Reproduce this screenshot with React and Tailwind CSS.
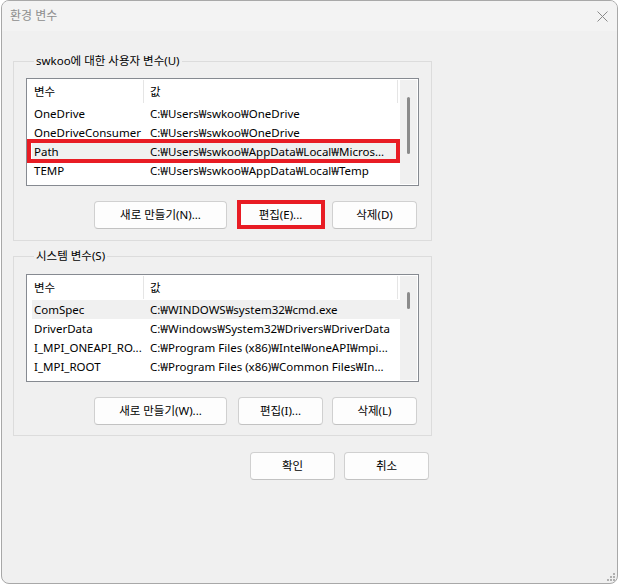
import React from "react";

const FONT = "font-['Noto_Sans','Noto_Sans_CJK_KR',sans-serif]";

function Btn({ children, w, ml, red }) {
  return (
    <div className={`relative ${ml}`}>
      <button
        className={`${w} h-[28px] rounded-[4px] border border-[#d0d0d0] border-b-[#c2c2c2] bg-[#fdfdfd] text-[11.5px] leading-[16px] text-black flex items-center justify-center`}
      >
        {children}
      </button>
      {red && (
        <div className="absolute -left-[1px] -right-[2px] -top-[1px] bottom-0 border-4 border-[#e81c24] pointer-events-none" />
      )}
    </div>
  );
}

function List({ rows, hi, red, thumbTop, thumbH }) {
  return (
    <div className="w-[393px] h-[108px] border border-[#868a91] bg-white flex">
      <div className="w-[373px] h-full overflow-hidden flex flex-col">
        <div className="h-[25px] shrink-0 flex text-[11.5px] text-black">
          <div className="w-[117px] pl-[7px] flex items-center border-r border-[#e5e5e5] my-[1px]">
            변수
          </div>
          <div className="w-[254px] pl-[6px] flex items-center border-r border-[#e5e5e5] my-[1px]">
            값
          </div>
        </div>
        {rows.map((r, i) => (
          <div key={i} className="relative h-[19px] shrink-0 pl-[5px] flex">
            <div
              className={`flex-1 flex text-[11.5px] leading-[19px] text-black whitespace-nowrap ${
                i === hi ? "bg-[#f0f0f0]" : ""
              }`}
            >
              <div className="w-[112px] pl-[2px] overflow-hidden">{r[0]}</div>
              <div className="flex-1 pl-[6px] overflow-hidden">{r[1]}</div>
            </div>
            {i === red && (
              <div className="absolute -top-[3px] -bottom-[2px] left-0 right-0 border-4 border-[#e81c24] pointer-events-none" />
            )}
          </div>
        ))}
      </div>
      <div className="w-[17px] my-[1px] bg-[#f0f0f0]">
        <div className={`ml-[7px] w-[3px] rounded-full bg-[#8b8b8b] ${thumbTop} ${thumbH}`} />
      </div>
    </div>
  );
}

export default function App() {
  const userRows = [
    ["OneDrive", "C:₩Users₩swkoo₩OneDrive"],
    ["OneDriveConsumer", "C:₩Users₩swkoo₩OneDrive"],
    ["Path", "C:₩Users₩swkoo₩AppData₩Local₩Micros..."],
    ["TEMP", "C:₩Users₩swkoo₩AppData₩Local₩Temp"],
  ];
  const sysRows = [
    ["ComSpec", "C:₩WINDOWS₩system32₩cmd.exe"],
    ["DriverData", "C:₩Windows₩System32₩Drivers₩DriverData"],
    ["I_MPI_ONEAPI_RO...", "C:₩Program Files (x86)₩Intel₩oneAPI₩mpi..."],
    ["I_MPI_ROOT", "C:₩Program Files (x86)₩Common Files₩In..."],
  ];
  return (
    <div className={`w-[618px] h-[585px] bg-white ${FONT}`}>
      <div className="relative ml-[1px] w-[617px] h-[584px] border border-[#a8a8a8] rounded-[8px] overflow-hidden flex flex-col bg-[#f0f0f0]">
        <div className="h-[30px] shrink-0 bg-[#f3f3f3] flex items-center justify-between pl-[8px] pr-[9px]">
          <span className="text-[12px] text-[#8e8e8e]">환경 변수</span>
          <svg width="11" height="11" viewBox="0 0 11 11">
            <path d="M0.5 0.5 L10.5 10.5 M10.5 0.5 L0.5 10.5" stroke="#8a8a8a" strokeWidth="1" />
          </svg>
        </div>
        <div className="flex-1 pl-[11px] pt-[22px]">
          <fieldset className="w-[417px] border border-[#dcdcdc] px-[12px] pb-[11px]">
            <legend className="ml-[8px] px-[2px] text-[11.5px] leading-[16px] text-black">
              swkoo에 대한 사용자 변수(U)
            </legend>
            <div className="mt-[9px]">
              <List rows={userRows} hi={2} red={2} thumbTop="mt-[17px]" thumbH="h-[57px]" />
            </div>
            <div className="mt-[15px] flex">
              <Btn w="w-[133px]" ml="ml-[68px]">새로 만들기(N)...</Btn>
              <Btn w="w-[85px]" ml="ml-[11px]" red>편집(E)...</Btn>
              <Btn w="w-[85px]" ml="ml-[9px]">삭제(D)</Btn>
            </div>
          </fieldset>
          <fieldset className="mt-[7px] w-[417px] border border-[#dcdcdc] px-[12px] pb-[10px]">
            <legend className="ml-[8px] px-[2px] text-[11.5px] leading-[16px] text-black">
              시스템 변수(S)
            </legend>
            <div className="mt-[10px]">
              <List rows={sysRows} hi={0} red={-1} thumbTop="mt-[16px]" thumbH="h-[17px]" />
            </div>
            <div className="mt-[15px] flex">
              <Btn w="w-[133px]" ml="ml-[68px]">새로 만들기(W)...</Btn>
              <Btn w="w-[85px]" ml="ml-[11px]">편집(I)...</Btn>
              <Btn w="w-[85px]" ml="ml-[9px]">삭제(L)</Btn>
            </div>
          </fieldset>
          <div className="mt-[16px] w-[417px] flex justify-end gap-[9px] pr-[1px]">
            <Btn w="w-[85px]" ml="">확인</Btn>
            <Btn w="w-[85px]" ml="">취소</Btn>
          </div>
        </div>
        <svg className="absolute right-[2px] bottom-[2px]" width="10" height="10" viewBox="0 0 10 10">
          <rect x="8" y="2" width="2" height="2" fill="#b0b0b0" />
          <rect x="5" y="5" width="2" height="2" fill="#b0b0b0" />
          <rect x="8" y="5" width="2" height="2" fill="#b0b0b0" />
          <rect x="2" y="8" width="2" height="2" fill="#b0b0b0" />
          <rect x="5" y="8" width="2" height="2" fill="#b0b0b0" />
          <rect x="8" y="8" width="2" height="2" fill="#b0b0b0" />
        </svg>
      </div>
    </div>
  );
}
